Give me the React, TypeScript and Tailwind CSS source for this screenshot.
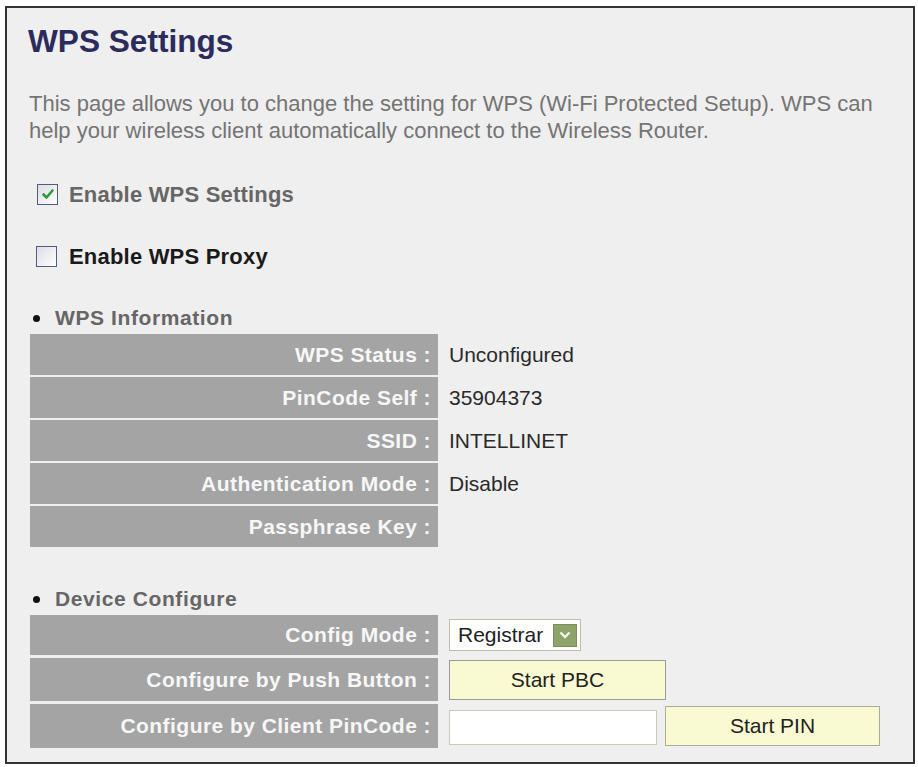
import React from "react";

const font = { fontFamily: '"Liberation Sans", Arial, sans-serif' };

function Row({ label, children, h }: { label: string; children?: React.ReactNode; h: string }) {
  return (
    <div className={`flex ${h}`}>
      <div className="w-[408px] shrink-0 bg-[#a4a4a4] flex items-center justify-end pr-[7px] text-[21px] font-bold text-[#f7f7f7] tracking-[0.45px]">
        {label}
      </div>
      <div className="flex items-center pl-[11px] text-[21px] text-[#2a2a2a]">{children}</div>
    </div>
  );
}

function Checkbox({ checked }: { checked?: boolean }) {
  return (
    <div className="w-[21px] h-[21px] border border-[#4f5e80] bg-gradient-to-br from-[#dcdce4] to-white flex items-center justify-center">
      {checked && (
        <svg width="14" height="14" viewBox="0 0 14 14">
          <path d="M2.5 7.5 L5.5 10.5 L11.5 3.5" fill="none" stroke="#2a9a3a" strokeWidth="2.6" strokeLinecap="round" strokeLinejoin="round" />
        </svg>
      )}
    </div>
  );
}

export default function App() {
  return (
    <div className="bg-white w-[918px] h-[767px] pt-[6px] pl-[5px]" style={font}>
      <div className="w-[910px] h-[758px] border-2 border-[#333333] bg-[#efefef] flex flex-col">
        <h1 className="ml-[21px] mt-[15px] text-[31.6px] leading-[36px] font-bold text-[#2b2b5c]">WPS Settings</h1>
        <p className="ml-[22px] mt-[31px] text-[22px] leading-[27px] text-[#747474] whitespace-nowrap">
          This page allows you to change the setting for WPS (Wi-Fi Protected Setup). WPS can
          <br />
          help your wireless client automatically connect to the Wireless Router.
        </p>
        <div className="ml-[30px] mt-[38px] h-[24px] flex items-center gap-[11px]">
          <Checkbox checked />
          <span className="text-[22px] font-bold text-[#666666] tracking-[0.2px]">Enable WPS Settings</span>
        </div>
        <div className="ml-[29px] mt-[38px] h-[24px] flex items-center gap-[12px]">
          <Checkbox />
          <span className="text-[22px] font-bold text-[#1a1a1a] tracking-[0.2px]">Enable WPS Proxy</span>
        </div>
        <div className="ml-[26px] mt-[38px] h-[24px] flex items-center gap-[15px]">
          <span className="w-[7px] h-[7px] rounded-full bg-[#111]" />
          <span className="text-[21px] font-bold text-[#666666] tracking-[0.6px]">WPS Information</span>
        </div>
        <div className="ml-[23px] mt-[4px] flex flex-col gap-[2px]">
          <Row label="WPS Status :" h="h-[41px]">Unconfigured</Row>
          <Row label="PinCode Self :" h="h-[41px]">35904373</Row>
          <Row label="SSID :" h="h-[41px]">INTELLINET</Row>
          <Row label="Authentication Mode :" h="h-[41px]">Disable</Row>
          <Row label="Passphrase Key :" h="h-[41px]" />
        </div>
        <div className="ml-[26px] mt-[40px] h-[24px] flex items-center gap-[15px]">
          <span className="w-[7px] h-[7px] rounded-full bg-[#111]" />
          <span className="text-[21px] font-bold text-[#666666] tracking-[0.6px]">Device Configure</span>
        </div>
        <div className="ml-[23px] mt-[4px] flex flex-col gap-[3px]">
          <Row label="Config Mode :" h="h-[40px]">
            <div className="w-[132px] h-[32px] border border-[#b8c0a8] bg-white flex items-center justify-between pl-[8px] pr-[3px]">
              <span className="text-[21px] text-[#222]">Registrar</span>
              <div className="w-[24px] h-[23px] bg-[#8ea36a] border border-[#7a8f58] flex items-center justify-center">
                <svg width="14" height="10" viewBox="0 0 14 10">
                  <path d="M2.5 2.5 L7 7 L11.5 2.5" fill="none" stroke="#f4f8ec" strokeWidth="2.4" />
                </svg>
              </div>
            </div>
          </Row>
          <Row label="Configure by Push Button :" h="h-[43px]">
            <button className="w-[217px] h-[40px] bg-[#fafad2] border border-[#9a9a9a] text-[21px] text-[#222]">Start PBC</button>
          </Row>
          <Row label="Configure by Client PinCode :" h="h-[44px]">
            <div className="flex items-center gap-[8px]">
              <div className="w-[208px] h-[35px] bg-white border border-[#c4ccb4] mt-[3px]" />
              <button className="w-[215px] h-[40px] bg-[#fafad2] border border-[#a8ad98] text-[21px] text-[#222]">Start PIN</button>
            </div>
          </Row>
        </div>
      </div>
    </div>
  );
}
